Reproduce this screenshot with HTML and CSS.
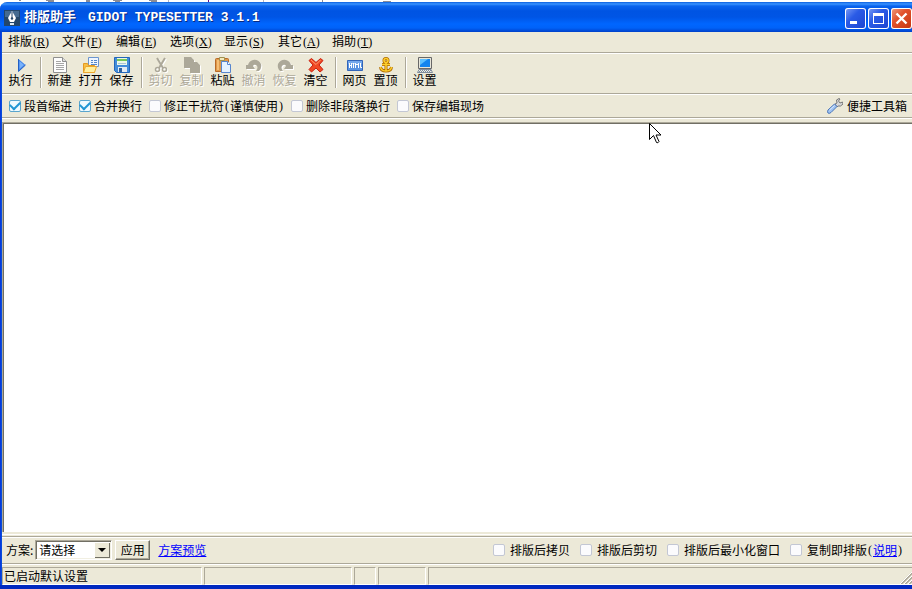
FILE: index.html
```html
<!DOCTYPE html>
<html lang="zh-CN">
<head>
<meta charset="utf-8">
<title>排版助手 GIDOT TYPESETTER 3.1.1</title>
<link rel="stylesheet" href="styles.css">
</head>
<body>
<svg class="behind" viewBox="0 0 912 3" preserveAspectRatio="xMinYMin slice" aria-hidden="true">
  <path d="M0 0H912V3H0z" fill="#fff"/>
  <path d="M19 0h2v1h-2zM46 0h8v2h-6v-1h-2zM86 0h4v2h-4zM113 0h9v1h-2v1h-5v-1h-2zM149 0h8v2h-6v-1h-2zM322 0h1v2h-1zM383 1h8v1h-8z" fill="#8c8c94"/>
  <path d="M208 0h1v2h-1z" fill="#6a0d83"/><path d="M168 0h1v2h-1zM263 0h1v2h-1z" fill="#b4b4bc"/>
</svg>
<div class="window">
  <header class="titlebar">
    <svg class="app-icon" viewBox="0 0 16 16" aria-hidden="true">
      <path d="M0 0h16v16H0z" fill="#24476a"/><path d="M1 1h14v6H1z" fill="#456b90"/>
      <path d="M8 1 12 8 10 12H6L4 8z" fill="#fff"/><path d="M6 13h4v2H6z" fill="#dce7f0"/>
      <path d="M8 2v6" stroke="#24476a"/><circle cx="8" cy="8.500" r="1.200" fill="#24476a"/>
    </svg>
    <h1><span>排版助手</span><span>GIDOT TYPESETTER 3.1.1</span></h1>
    <div class="window-buttons">
      <button type="button" aria-label="最小化"><svg viewBox="0 0 21 21"><path d="M5 13h7v3H5z" fill="#fff"/></svg></button>
      <button type="button" aria-label="最大化"><svg viewBox="0 0 21 21"><path d="M5 5h11v11H5zM6 8v7h9V8z" fill="#fff" fill-rule="evenodd"/></svg></button>
      <button type="button" class="close" aria-label="关闭"><svg viewBox="0 0 21 21"><path d="m5.500 5.500 10 10m0-10-10 10" stroke="#fff" stroke-width="2.400"/></svg></button>
    </div>
  </header>
  <nav class="menu">
    <button type="button">排版<span class="key">(<u>R</u>)</span></button>
    <button type="button">文件<span class="key">(<u>F</u>)</span></button>
    <button type="button">编辑<span class="key">(<u>E</u>)</span></button>
    <button type="button">选项<span class="key">(<u>X</u>)</span></button>
    <button type="button">显示<span class="key">(<u>S</u>)</span></button>
    <button type="button">其它<span class="key">(<u>A</u>)</span></button>
    <button type="button">捐助<span class="key">(<u>T</u>)</span></button>
  </nav>
  <div class="toolbar">
    <button type="button">
      <svg viewBox="0 0 16 16"><path d="M5.500 2 12.500 8l-7 6.500z" fill="#3f83e8"/><path d="M6.500 4v8l4.500-4z" fill="#79b2fb"/><path d="M5.500 2v12.500L12.500 8" fill="none" stroke="#2360c4"/></svg>执行</button>
    <span class="separator"></span>
    <button type="button">
      <svg viewBox="0 0 16 16"><path d="M1.500.5h9l4 4v11h-13z" fill="#fdfdfd" stroke="#8f8f8f"/><path d="M10.500.5v4h4" fill="#ddd" stroke="#8f8f8f"/><path d="M4 4.500h5M4 6.500h8M4 8.500h8M4 10.500h8M4 12.500h8" stroke="#a6a6a6"/></svg>新建</button>
    <button type="button">
      <svg viewBox="0 0 16 16"><path d="M5.500.5h10v9h-10z" fill="#eef5ff" stroke="#6c95cf"/><path d="M8 3.500h2m1 0h3M8 5.500h2m1 0h3M8 7.500h6" stroke="#5588cc"/><path d="M.5 6.500h4l1 2h6v7H.5z" fill="#f7bf45" stroke="#e59a20"/><path d="M2.500 9.500h11l-2 6H.5z" fill="#fff0a0" stroke="#eda62d"/></svg>打开</button>
    <button type="button">
      <svg viewBox="0 0 16 16"><path d="M.5.5h15v15h-13l-2-2z" fill="#438ddb" stroke="#2366ba"/><path d="M3 1h10v7H3z" fill="#edf8e8"/><path d="M3 2h10v2H3z" fill="#75c758"/><path d="M4 6.500h8" stroke="#b0c6d4"/><path d="M4 10h9v5H4z" fill="#e1eaf4"/><path d="M5 11h3v4H5z" fill="#2f629f"/></svg>保存</button>
    <span class="separator"></span>
    <button type="button" disabled>
      <svg viewBox="0 0 16 16"><path d="m4 1 6 10M12 1 6 11" stroke="#aca899" stroke-width="2" fill="none"/><circle cx="4.500" cy="12.500" r="2" fill="none" stroke="#aca899" stroke-width="1.500"/><circle cx="11.500" cy="12.500" r="2" fill="none" stroke="#aca899" stroke-width="1.500"/></svg>剪切</button>
    <button type="button" disabled>
      <svg viewBox="0 0 16 16"><path d="M0 0h7l3 3v2H7v6H0zM8 5h5l3 3v8H6V5h2z" fill="#aca899"/></svg>复制</button>
    <button type="button">
      <svg viewBox="0 0 16 16"><path d="M.5 2.500q0-1 1-1h11q1 0 1 1v12H.5z" fill="#df9a4b" stroke="#b86a28"/><path d="M2 3h2v10H2z" fill="#f5be75"/><path d="M4.500.5h5v3h-5z" fill="#f2e9bb" stroke="#a19150"/><path d="M6.500 4.500h6l3 3v8h-9z" fill="#e5f2ff" stroke="#5785cd"/><path d="M12.500 4.500v3h3" fill="#fff" stroke="#5785cd"/></svg>粘贴</button>
    <button type="button" disabled>
      <svg viewBox="0 0 16 16"><path d="M0 8h2q1-4 5-5 5-1 8 4 1 4-2 7h-3q3-4 0-6-2-1-3 1l2 3H0z" fill="#aca899"/></svg>撤消</button>
    <button type="button" disabled>
      <svg viewBox="0 0 16 16"><path d="M16 8h-2q-1-4-5-5-5-1-8 4-1 4 2 7h3q-3-4 0-6 2-1 3 1l-2 3h9z" fill="#aca899"/></svg>恢复</button>
    <button type="button">
      <svg viewBox="0 0 16 16"><path d="m3.500 1.500 4.500 4 4.500-4 2.500 2L11 8l4 4.500-3 2.500-4-4-4.500 4L1 12.500 5 8 1 3.500z" fill="#f04a24" stroke="#c92010"/><path d="m3 3 5 4.500L12.500 3" fill="none" stroke="#ff9b70"/></svg>清空</button>
    <span class="separator"></span>
    <button type="button">
      <svg viewBox="0 0 16 16"><path d="M.5 3.500h15v10H.5z" fill="#5a93e1" stroke="#3265b9"/><path d="M1 4h14v3H1z" fill="#75a8ec"/><path d="M2.500 6v5M2 8.500h2M4.500 6v5M5.500 6.500h2M6.500 6v5M8.500 11V6M9 7.500h2M11.500 6v5M13.500 6v4.500H15" fill="none" stroke="#fff"/></svg>网页</button>
    <button type="button">
      <svg viewBox="0 0 16 16"><g fill="none" stroke="#ad6900" stroke-width="3"><circle cx="8" cy="3.500" r="2"/><path d="M8 6v8M4 7.500h8M2.500 10q.5 4 5.500 4t5.500-4"/></g><g fill="none" stroke="#ffd02c" stroke-width="1.500"><circle cx="8" cy="3.500" r="2"/><path d="M8 6v8M4 7.500h8M2.500 10q.5 4 5.500 4t5.500-4"/></g></svg>置顶</button>
    <span class="separator"></span>
    <button type="button">
      <svg viewBox="0 0 16 16"><path d="M1.500.5h13v11h-13z" fill="#e7e5d9" stroke="#686868"/><path d="M3 2h10v8H3z" fill="#1284ef"/><path d="M3 2h8L3 8z" fill="#5cc0ff"/><path d="M2 12.500h12l1.500 3H.5z" fill="#f0eee4" stroke="#7f8d9e"/><path d="M3 13.500h11M2 14.500h12" stroke="#7d8da0" stroke-dasharray="1 1"/></svg>设置</button>
  </div>
  <div class="options">
    <label><input type="checkbox" checked>段首缩进</label>
    <label><input type="checkbox" checked>合并换行</label>
    <label><input type="checkbox">修正干扰符<span class="key">(</span>谨慎使用<span class="key">)</span></label>
    <label><input type="checkbox">删除非段落换行</label>
    <label><input type="checkbox">保存编辑现场</label>
    <button type="button" class="toolbox">
      <svg viewBox="0 0 16 16"><path d="m8 6 2-1-.5-3L12 .5l1 .5-1.500 2 1.500 2 2.500-1 .5 2L13.500 8H11l-1 1z" fill="#d8d8d8" stroke="#777"/><path d="m7.500 6 2.500 2.500-6 6q-2 1.500-3 .5t0-3z" fill="#9fc3f3" stroke="#4b75b8"/><path d="m2.500 12 5-4.500" stroke="#dcecff"/></svg>便捷工具箱</button>
  </div>
  <main class="editor"><textarea aria-label="文本" spellcheck="false"></textarea></main>
  <div class="scheme-bar">
    <label for="scheme">方案:</label>
    <span class="combo">
      <select id="scheme"><option>请选择</option></select>
      <svg viewBox="0 0 16 16" aria-hidden="true"><path d="M4 6h8l-4 4z" fill="#000"/></svg>
    </span>
    <button type="button" class="apply">应用</button>
    <a href="#preview">方案预览</a>
    <div class="after">
      <label><input type="checkbox">排版后拷贝</label>
      <label><input type="checkbox">排版后剪切</label>
      <label><input type="checkbox">排版后最小化窗口</label>
      <span class="instant"><label><input type="checkbox">复制即排版</label><span class="key">(</span><a href="#help">说明</a><span class="key">)</span></span>
    </div>
  </div>
  <footer class="status">
    <span>已启动默认设置</span><span></span><span></span><span></span>
    <span class="last"><svg viewBox="0 0 12 12" aria-hidden="true"><path d="M1 12 12 1M5 12l7-7M9 12l3-3" stroke="#aca899" stroke-width="2"/><path d="M0 12 12 0M4 12l8-8M8 12l4-4" stroke="#fff"/></svg></span>
  </footer>
</div>
<svg class="pointer" viewBox="0 0 13 22" aria-hidden="true"><path d="M.5.5v16l4-4 3 7q1.500 1 2.500-1l-3-6.500h5z" fill="#fff" stroke="#000"/></svg>
</body>
</html>
```

FILE: styles.css
```css
:root {
  --face: #ece9d8;
  --shade: #aca899;
  --dark: #716f64;
  --cjk: "Noto Sans CJK SC", sans-serif;
}

* { box-sizing: border-box; }

body {
  display: flex;
  flex-direction: column;
  height: 100vh;
  margin: 0;
  overflow: hidden;
  background: #fff;
  color: #000;
  font: 12px/16px var(--cjk);
}

button, select, textarea, input { margin: 0; font: inherit; color: inherit; }
button { padding: 0; border: 0; background: none; white-space: nowrap; }
svg { display: block; flex: none; }
label { display: flex; align-items: center; white-space: nowrap; }
a { color: #00f; text-decoration: underline; }
.key { padding: 0 1px; font-family: "Liberation Serif", serif; }

.behind { width: 100%; height: 2px; }

.window {
  display: flex;
  flex: 1;
  flex-direction: column;
  min-height: 0;
  padding-left: 2px;
  border-bottom: 4px solid #0029c0;
  border-radius: 7px 0 0 0;
  background: linear-gradient(to right, #0831d9, #0855dd 2px, var(--face) 2px);
}

.titlebar {
  display: flex;
  align-items: center;
  height: 30px;
  margin-left: -2px;
  padding: 2px 0 0 4px;
  border-radius: 7px 0 0 0;
  background: linear-gradient(#0a5fe0, #3a93ff 2px, #0a64ee 4px, #0054e3 9px, #0055e5 15px, #0066ff 22px, #0062f8 26px, #0040c8 30px);
}

.app-icon { width: 16px; height: 16px; }

h1 {
  display: flex;
  flex: 1;
  gap: 12px;
  margin: 0 0 0 4px;
  overflow: hidden;
  color: #fff;
  font: bold 13px/20px "Liberation Mono", var(--cjk);
  text-shadow: 1px 1px #0a2a80;
  white-space: nowrap;
}

.window-buttons { display: flex; gap: 2px; }
.window-buttons button {
  border-radius: 3px;
  background: linear-gradient(135deg, #7f9ff5, #2a5be6 40%, #1c44d0);
  box-shadow: inset 0 0 0 1px #fff;
}
.window-buttons .close { background: linear-gradient(135deg, #f0a083, #e2532d 40%, #c43410); }
.window-buttons svg { width: 21px; height: 21px; }

.menu { display: flex; height: 20px; padding: 0 0 2px 6px; }
.menu button { width: 54px; text-align: left; }

.toolbar, .options {
  display: flex;
  border-top: 1px solid var(--shade);
  box-shadow: inset 0 1px #fff;
}
.toolbar { height: 41px; padding: 4px 0 0 3px; }
.toolbar button {
  display: flex;
  flex-direction: column;
  align-items: center;
  width: 31px;
  height: 32px;
  line-height: 14px;
}
.toolbar svg { width: 16px; height: 16px; }
.toolbar button:disabled { color: var(--shade); text-shadow: 1px 1px #fff; }
.toolbar button:disabled svg { filter: drop-shadow(1px 1px 0 #fff); }
.separator {
  width: 2px;
  height: 31px;
  margin: 0 2px 0 4px;
  border-left: 1px solid var(--shade);
  border-right: 1px solid #fff;
}

.options { align-items: center; gap: 7px; height: 24px; padding: 0 5px 0 7px; }

input[type="checkbox"] {
  display: grid;
  place-items: center;
  appearance: none;
  width: 12px;
  height: 12px;
  margin-right: 3px;
  border: 1px solid #c3c7d4;
  border-radius: 2px;
  background: #fbfbfd;
}
input[type="checkbox"]:checked { border-color: #5aa5cd; background: #effaff; }
input[type="checkbox"]:checked::before {
  content: "";
  width: 8px;
  height: 5px;
  margin-bottom: 3px;
  border: solid #2196d4;
  border-width: 0 0 2px 2px;
  transform: rotate(-45deg);
}

.toolbox { display: flex; align-items: center; gap: 4px; margin-left: auto; }
.toolbox svg { width: 16px; height: 16px; }

.editor {
  display: flex;
  flex: 1;
  min-height: 0;
  padding: 4px 0 2px;
  border-top: 1px solid var(--shade);
  border-bottom: 1px solid #fff;
  box-shadow: inset 0 1px #fff;
}
textarea {
  flex: 1;
  resize: none;
  outline: 0;
  border: solid var(--shade);
  border-width: 1px 0 0 1px;
  background: #fff;
  box-shadow: inset 1px 1px var(--dark);
}

.scheme-bar {
  display: flex;
  align-items: center;
  height: 28px;
  margin-top: 1px;
  padding: 0 9px 0 4px;
  border-top: 1px solid var(--shade);
  border-bottom: 1px solid var(--shade);
  box-shadow: inset 0 1px #fff, 0 1px #fff;
}
.combo {
  display: grid;
  grid-template-columns: 1fr 16px;
  align-items: center;
  width: 77px;
  height: 20px;
  margin-left: 2px;
  padding: 1px;
  border: 1px solid;
  border-color: var(--shade) #fff #fff var(--shade);
  background: #fff;
  box-shadow: inset 1px 1px var(--dark), inset -1px -1px #f1efe2;
}
.combo select {
  grid-area: 1 / 1 / 2 / 3;
  appearance: none;
  padding: 0 0 0 2px;
  border: 0;
  background: none;
}
.combo svg {
  grid-area: 1 / 2;
  width: 16px;
  height: 16px;
  background: var(--face);
  box-shadow: inset 1px 1px #fff, inset -1px -1px var(--dark);
  pointer-events: none;
}
.apply {
  width: 35px;
  height: 20px;
  margin: 0 8px 0 3px;
  border: 1px solid;
  border-color: #fff var(--dark) var(--dark) #fff;
  background: var(--face);
  box-shadow: inset -1px -1px var(--shade);
  line-height: 18px;
}
.after { display: flex; gap: 10px; margin-left: auto; }
.after input[type="checkbox"] { margin-right: 5px; }
.instant { display: flex; }

.status {
  display: grid;
  grid-template-columns: 200px 148px 22px 48px 1fr;
  gap: 2px;
  height: 21px;
  padding-top: 3px;
}
.status span {
  padding-left: 1px;
  border: 1px solid;
  border-color: var(--shade) #fff #fff var(--shade);
}
.status .last { display: flex; align-items: flex-end; justify-content: flex-end; border-right: 0; }
.status svg { width: 12px; height: 12px; }

.pointer { position: absolute; top: 123px; left: 649px; width: 13px; height: 22px; }
```
